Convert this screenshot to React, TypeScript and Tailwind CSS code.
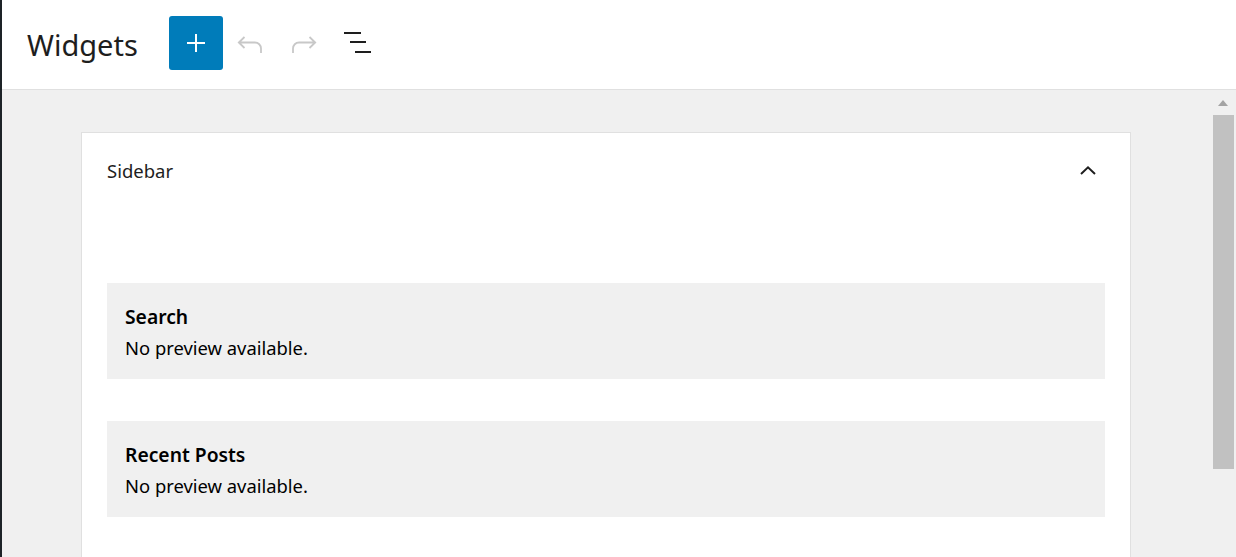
import React from "react";

function WidgetBlock({ title }: { title: string }) {
  return (
    <div className="bg-[#f0f0f0] h-[96px] pl-[18px] pt-[20px] flex flex-col">
      <div className="text-[19.3px] leading-[28px] font-semibold text-black">{title}</div>
      <div className="text-[18.4px] leading-[26px] text-black mt-[4px]">No preview available.</div>
    </div>
  );
}

export default function App() {
  return (
    <div
      className="flex h-[557px] w-[1236px] overflow-hidden bg-white"
      style={{ fontFamily: '"Noto Sans", "Open Sans", sans-serif' }}
    >
      <div className="w-[2px] shrink-0 bg-[#1d2327]" />
      <div className="flex-1 flex flex-col min-w-0">
        <header className="h-[90px] shrink-0 border-b border-[#e0e0e0] flex items-start">
          <h1 className="ml-[25px] mt-[30px] text-[29px] font-normal text-[#1e1e1e] leading-[29px] whitespace-nowrap">
            Widgets
          </h1>
          <button className="ml-[31px] mt-[16px] w-[54px] h-[54px] rounded-[3px] bg-[#007cba] flex items-center justify-center">
            <svg width="20" height="20" viewBox="0 0 20 20" fill="none">
              <path d="M10 1v18M1 10h18" stroke="white" strokeWidth="2" />
            </svg>
          </button>
          <svg width="26" height="19" viewBox="0 0 26 19" fill="none" className="ml-[14px] mt-[35px]">
            <path d="M7.5 2 1.8 7.5l5.7 5.5M2.5 7.5H18A6 6 0 0 1 24 13.5V18" stroke="#c8c8c8" strokeWidth="1.8" />
          </svg>
          <svg width="26" height="19" viewBox="0 0 26 19" fill="none" className="ml-[28px] mt-[35px]">
            <path d="M18.5 2l5.7 5.5-5.7 5.5M23.5 7.5H8A6 6 0 0 0 2 13.5V18" stroke="#c8c8c8" strokeWidth="1.8" />
          </svg>
          <svg width="30" height="24" viewBox="0 0 30 24" fill="none" className="ml-[26px] mt-[31px]">
            <path d="M1 2h17M7 11h16M12 21h16" stroke="#1e1e1e" strokeWidth="2" />
          </svg>
        </header>
        <div className="flex-1 flex bg-[#f0f0f0] min-h-0">
          <div className="flex-1 pt-[42px] pl-[79px] pr-[81px] min-w-0">
            <div className="bg-white border border-[#e0e0e0] border-b-0 h-full px-[25px]">
              <div className="h-[76px] flex items-center justify-between">
                <span className="text-[18.5px] text-[#1e1e1e]">Sidebar</span>
                <svg width="16" height="10" viewBox="0 0 16 10" className="mr-[9px] -mt-[2px]" fill="none">
                  <path d="M1 9 8 2.3 15 9" stroke="#1e1e1e" strokeWidth="2" />
                </svg>
              </div>
              <div className="mt-[74px] flex flex-col gap-[42px]">
                <WidgetBlock title="Search" />
                <WidgetBlock title="Recent Posts" />
              </div>
            </div>
          </div>
          <div className="w-[24px] shrink-0 bg-[#f0f0f0] flex flex-col items-center pt-[10px]">
            <svg width="10" height="6" viewBox="0 0 10 6" className="mr-[2px]">
              <path d="M0 6 5 0l5 6z" fill="#a3a3a3" />
            </svg>
            <div className="mt-[9px] w-[21px] h-[354px] bg-[#c1c1c1] mr-[1px]" />
          </div>
        </div>
      </div>
    </div>
  );
}
